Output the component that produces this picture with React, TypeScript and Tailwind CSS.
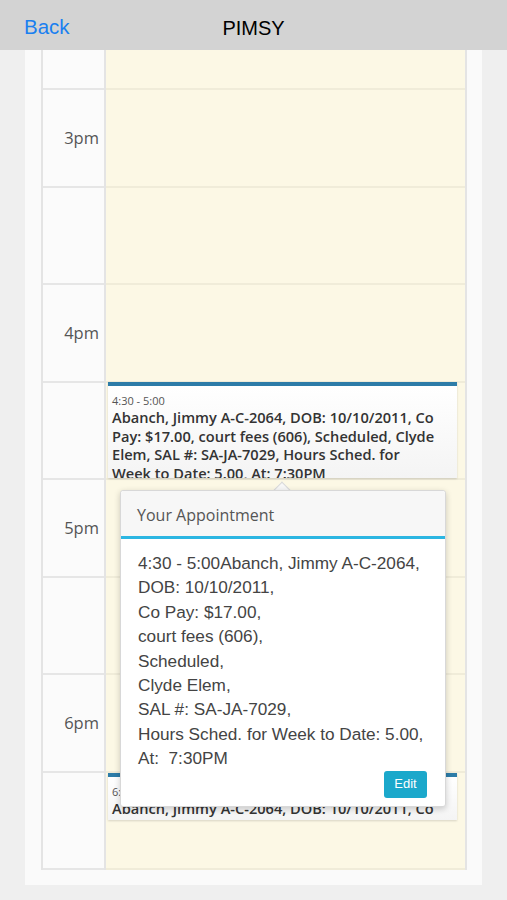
import React from "react";

const rows = ["", "3pm", "", "4pm", "", "5pm", "", "6pm", ""];

const detail =
  "Abanch, Jimmy A-C-2064, DOB: 10/10/2011, Co Pay: $17.00, court fees (606), Scheduled, Clyde Elem, SAL #: SA-JA-7029, Hours Sched. for Week to Date: 5.00, At: 7:30PM";

const popLines = [
  "4:30 - 5:00Abanch, Jimmy A-C-2064,",
  "DOB: 10/10/2011,",
  "Co Pay: $17.00,",
  "court fees (606),",
  "Scheduled,",
  "Clyde Elem,",
  "SAL #: SA-JA-7029,",
  "Hours Sched. for Week to Date: 5.00,",
  "At:  7:30PM",
];

function EventCard({ time, top, height }: { time: string; top: number; height: number }) {
  return (
    <div
      className="absolute left-[2px] right-[8px] overflow-hidden border-t-4 border-[#2d7ca8] bg-gradient-to-b from-white to-[#f4f4f4] shadow-[0_1px_2px_rgba(0,0,0,0.15)]"
      style={{ top, height }}
    >
      <div className="pl-[4px] pr-[20px] pt-[8px] font-['Open_Sans'] text-[#333]">
        <div className="text-[11px] leading-[14px] text-[#555]">{time}</div>
        <div className="text-[14.6px] font-semibold leading-[18.5px]">{detail}</div>
      </div>
    </div>
  );
}

export default function App() {
  return (
    <div className="flex h-[900px] w-[507px] flex-col overflow-hidden bg-[#efefef]">
      <header className="relative flex h-[50px] shrink-0 items-center bg-[#d3d3d3] pt-[5px] font-['Liberation_Sans',sans-serif]">
        <span className="pl-[24px] text-[20.5px] text-[#1a7ff0]">Back</span>
        <span className="absolute left-0 right-0 text-center text-[20px] text-black">PIMSY</span>
      </header>

      <div className="px-[25px]">
        <div className="bg-[#fafafa] pb-[15px] pl-[16px] pr-[15px]">
          <div className="relative flex border-x-2 border-[#e4e4e4] font-['Open_Sans',sans-serif]">
            <div className="w-[63px] shrink-0 border-r-2 border-[#e4e4e4] bg-[#fbfbfb]">
              {rows.map((label, i) => (
                <div
                  key={i}
                  className={`flex items-center justify-end border-b-2 border-[#e6e6e6] pr-[5px] pt-[2px] text-[16.5px] text-[#555] ${
                    i === 0 ? "h-[40px]" : "h-[97.5px]"
                  }`}
                >
                  {label}
                </div>
              ))}
            </div>
            <div className="relative flex-1 bg-[#fcf8e5]">
              {rows.map((_, i) => (
                <div
                  key={i}
                  className={`border-b-2 border-[#f0ecd9] ${i === 0 ? "h-[40px]" : "h-[97.5px]"}`}
                />
              ))}
              <EventCard time="4:30 - 5:00" top={332} height={96} />
              <EventCard time="6:30 - 7:00" top={723} height={47} />
            </div>

            <div className="absolute left-[77px] top-[440px] w-[326px] font-['Liberation_Sans',sans-serif]">
              <div className="absolute left-[156px] top-[-6px] h-[12px] w-[12px] rotate-45 border-l border-t border-[#d8d8d8] bg-[#f7f7f7]" />
              <div className="relative rounded-[3px] border border-[#d8d8d8] bg-white shadow-[0_2px_6px_rgba(0,0,0,0.2)]">
                <div className="flex h-[48px] items-center rounded-t-[3px] border-b-[3px] border-[#2cb6e2] bg-[#f7f7f7] pl-[16px] pt-[2px] font-['Open_Sans'] text-[16px] text-[#555]">
                  Your Appointment
                </div>
                <div className="px-[17px] pt-[12px] pb-[8px] text-[17.2px] leading-[24.4px] text-[#444]">
                  {popLines.map((l, i) => (
                    <div key={i} className="whitespace-pre">{l}</div>
                  ))}
                  <div className="mt-[0px] flex justify-end pr-[1px]">
                    <button className="h-[27px] w-[43px] rounded-[3px] bg-[#1ba8cb] text-[13px] text-white">
                      Edit
                    </button>
                  </div>
                </div>
              </div>
            </div>
          </div>
        </div>
      </div>
    </div>
  );
}
